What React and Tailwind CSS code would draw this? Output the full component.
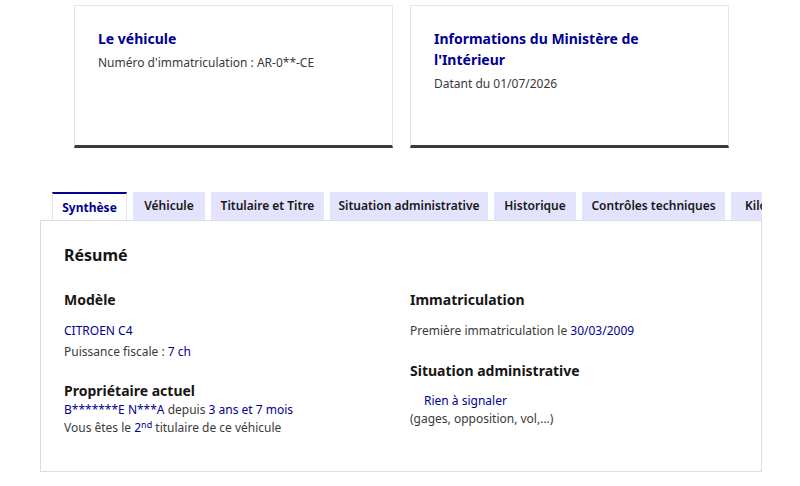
export default function App() {
  const tabs = [
    ["Véhicule", "w-[72px]"],
    ["Titulaire et Titre", "w-[113px]"],
    ["Situation administrative", "w-[158px]"],
    ["Historique", "w-[82px]"],
    ["Contrôles techniques", "w-[143px]"],
    ["Kilométrage", "w-[100px]"],
  ];
  return (
    <div className="w-[800px] h-[486px] bg-white overflow-hidden text-[#3a3a3a]" style={{ fontFamily: '"Noto Sans", "Open Sans", sans-serif' }}>
      <div className="flex gap-[17px] pl-[74px] pt-[5px]">
        <div className="w-[319px] h-[143px] border border-[#e5e5e5] border-b-[3px] border-b-[#3a3a3a] px-[23px] pt-[22px]">
          <div className="text-[14px] leading-[21px] font-bold text-[#000091]">Le véhicule</div>
          <div className="mt-[5px] text-[12px] leading-[18px]">Numéro d'immatriculation : AR-0**-CE</div>
        </div>
        <div className="w-[319px] h-[143px] border border-[#e5e5e5] border-b-[3px] border-b-[#3a3a3a] px-[23px] pt-[22px]">
          <div className="text-[14px] leading-[21px] font-bold text-[#000091] w-[230px]">Informations du Ministère de l'Intérieur</div>
          <div className="mt-[5px] text-[12px] leading-[18px]">Datant du 01/07/2026</div>
        </div>
      </div>

      <div className="ml-[40px] mt-[43px] w-[722px]">
        <div className="flex gap-[6px] pl-[12px] overflow-hidden h-[29px] items-end">
          <div className="shrink-0 w-[75px] h-[29px] flex items-center justify-center bg-white border-t-2 border-[#000091] border-x border-x-[#e5e5e5] text-[12px] font-bold text-[#000091] relative top-[1px]">Synthèse</div>
          {tabs.map(([t, w]) => (
            <div key={t} className={`shrink-0 ${w} h-[28px] flex items-center justify-center bg-[#e3e3fd] text-[12px] font-semibold text-[#161616] whitespace-nowrap`}>{t}</div>
          ))}
        </div>
        <div className="h-[252px] border border-[#dddddd] px-[23px] pt-[22px]">
          <div className="text-[16px] leading-[24px] font-bold text-[#161616]">Résumé</div>
          <div className="grid grid-cols-[346px_1fr] mt-[22px]">
            <div>
              <div className="text-[14px] leading-[22px] font-bold text-[#161616]">Modèle</div>
              <div className="mt-[10px] text-[12px] leading-[19px] text-[#000091]">CITROEN C4</div>
              <div className="mt-[2px] text-[12px] leading-[19px]">Puissance fiscale : <span className="text-[#000091]">7 ch</span></div>
              <div className="mt-[20px] text-[14px] leading-[20px] font-bold text-[#161616]">Propriétaire actuel</div>
              <div className="text-[12px] leading-[18px]"><span className="text-[#000091]">B*******E N***A</span> depuis <span className="text-[#000091]">3 ans et 7 mois</span></div>
              <div className="text-[12px] leading-[18px]">Vous êtes le <span className="text-[#000091]">2<sup>nd</sup></span> titulaire de ce véhicule</div>
            </div>
            <div>
              <div className="text-[14px] leading-[22px] font-bold text-[#161616]">Immatriculation</div>
              <div className="mt-[10px] text-[12px] leading-[19px]">Première immatriculation le <span className="text-[#000091]">30/03/2009</span></div>
              <div className="mt-[20px] text-[14px] leading-[22px] font-bold text-[#161616]">Situation administrative</div>
              <div className="mt-[10px] pl-[14px] text-[12px] leading-[18px] text-[#000091]">Rien à signaler</div>
              <div className="text-[12px] leading-[18px]">(gages, opposition, vol,...)</div>
            </div>
          </div>
        </div>
      </div>
    </div>
  );
}
